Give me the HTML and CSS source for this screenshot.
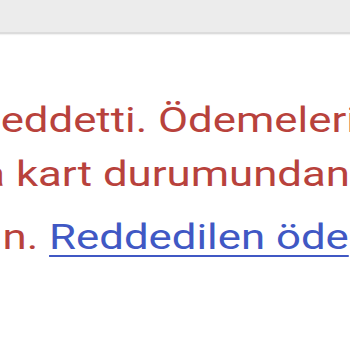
FILE: index.html
```html
<!DOCTYPE html>
<html lang="tr">
<head>
<meta charset="utf-8">
<link rel="stylesheet" href="styles.css">
</head>
<body>
<header class="topbar"></header>
<main class="content">
  <div class="message">
    <div class="line line-1">eddetti. Ödemeleri</div>
    <div class="line line-2">a kart durumundan</div>
    <div class="line line-3">n. <a class="link" href="#">Reddedilen öde</a></div>
  </div>
</main>
</body>
</html>
```
FILE: styles.css
```css
html, body {
  margin: 0;
  padding: 0;
  background: #ffffff;
  overflow: hidden;
  width: 350px;
  height: 350px;
}

.topbar {
  height: 32px;
  background: #ececec;
  border-bottom: 2px solid #dcdcdc;
  box-shadow: 0 1px 1px #f2f2f2;
}

.content {
  padding-top: 60px;
}

.message {
  transform: scaleX(1.25);
  transform-origin: 0 0;
  font-family: Roboto, "Noto Sans", sans-serif;
  font-size: 35px;
  line-height: 54px;
  color: #b8423c;
  white-space: nowrap;
}

.line-1 {
  margin-left: 0.5px;
}

.line-2 {
  margin-left: -15px;
}

.line-3 {
  margin-top: 9px;
  margin-left: 2px;
}

.link {
  color: #4058c4;
  text-decoration: underline;
  text-decoration-thickness: 2px;
  text-underline-offset: 6px;
}
```
